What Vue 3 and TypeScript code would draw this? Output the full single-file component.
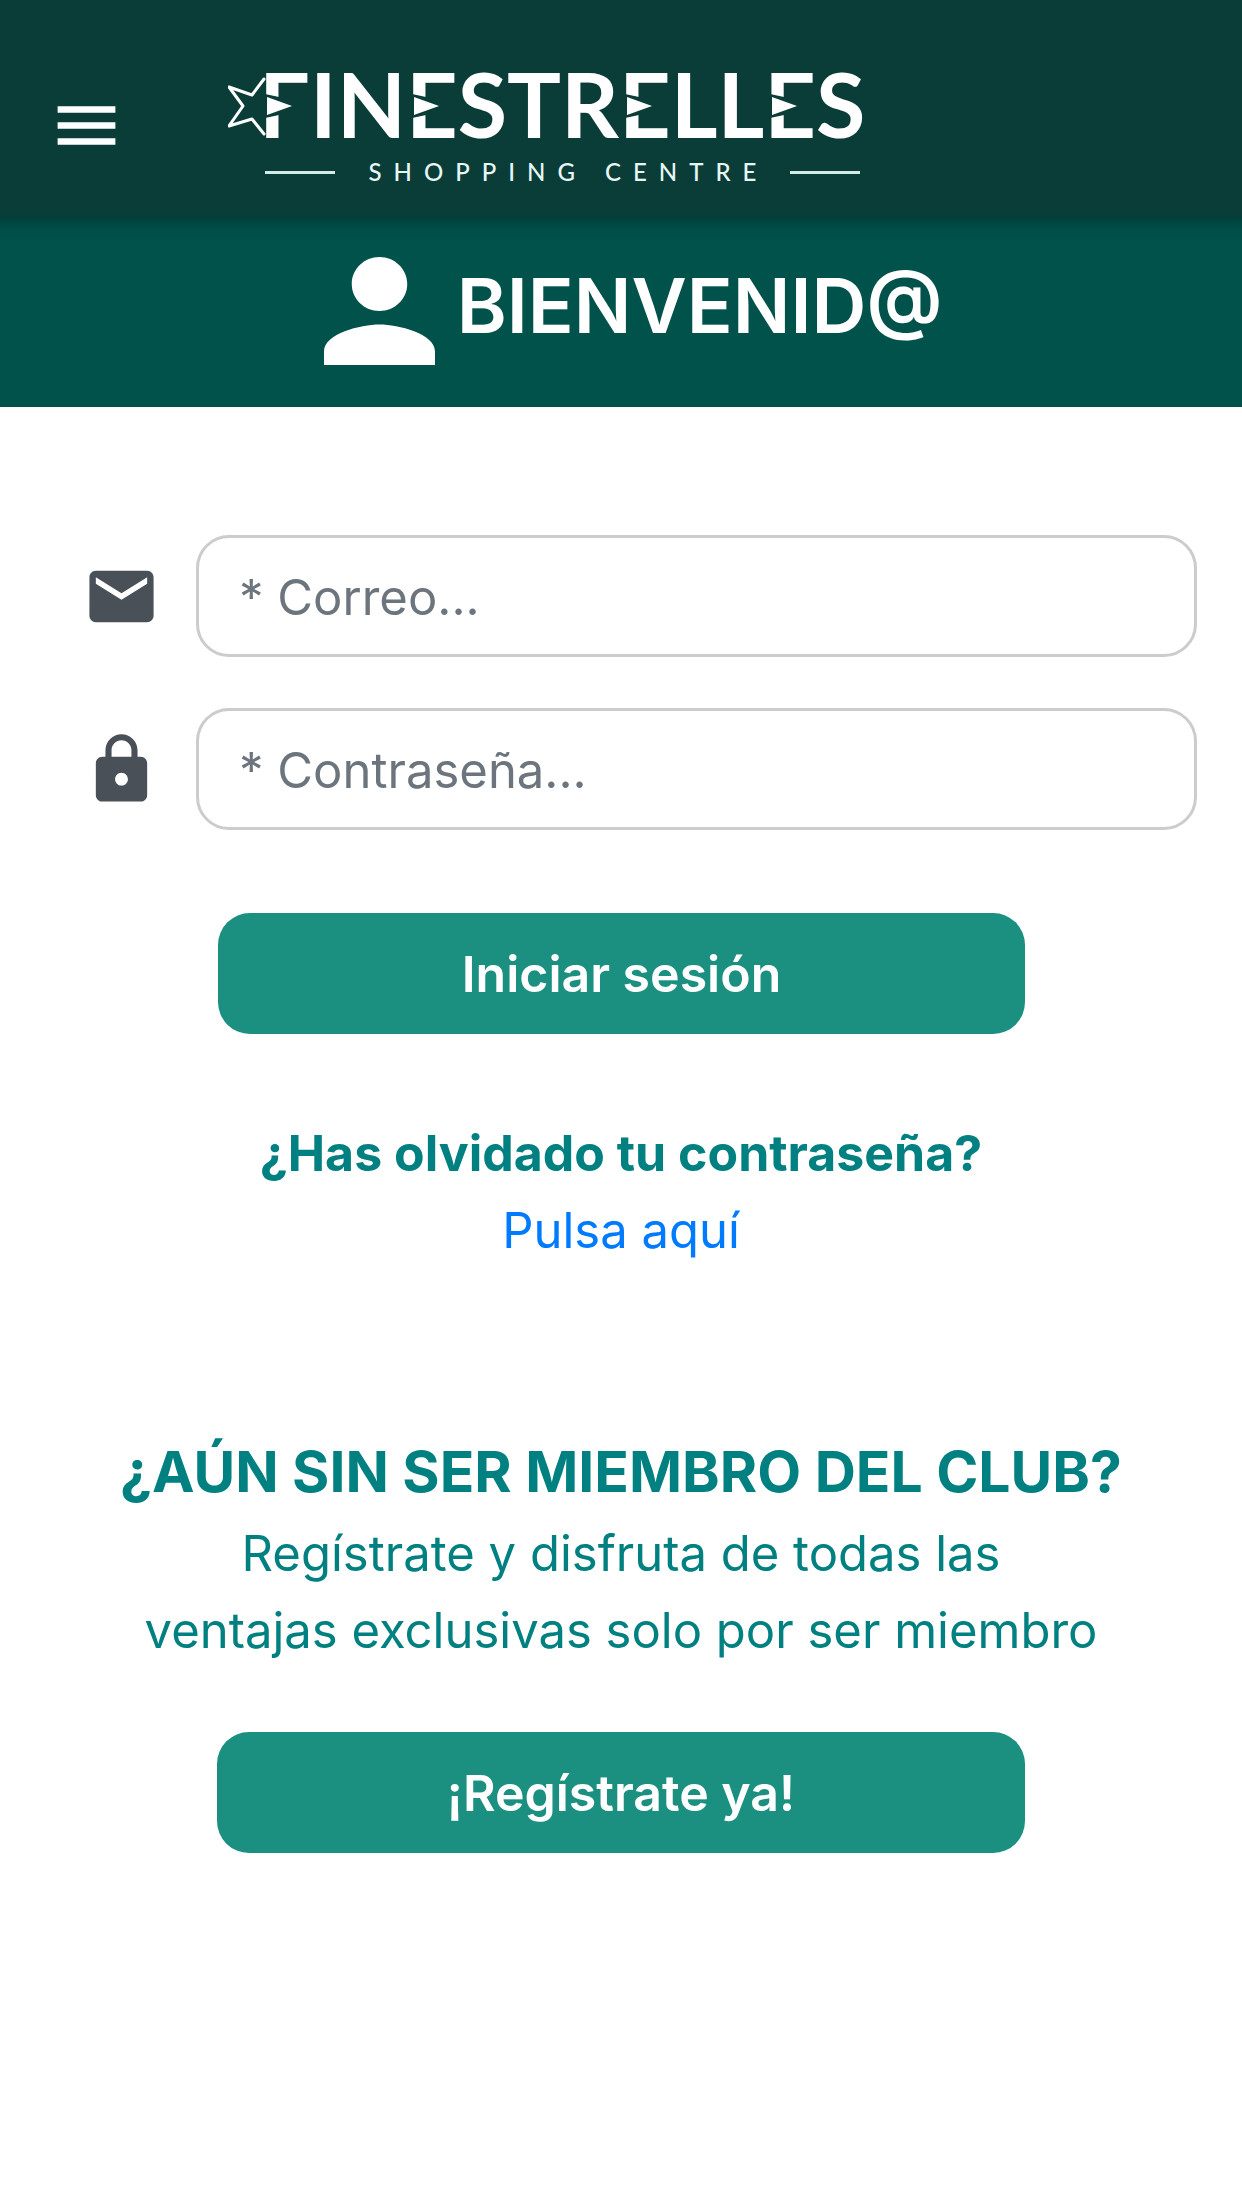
<script setup lang="ts">
import { ref } from 'vue'

interface Piece {
  text: string
  pennant: boolean
}

// Pieces flagged with a pennant have it in place of the middle arm
const brand: Piece[] = [
  { text: 'F', pennant: true },
  { text: 'IN', pennant: false },
  { text: 'E', pennant: true },
  { text: 'STR', pennant: false },
  { text: 'E', pennant: true },
  { text: 'LL', pennant: false },
  { text: 'E', pennant: true },
  { text: 'S', pennant: false },
]

const email = ref('')
const password = ref('')
</script>

<template>
  <div class="page">
    <header class="topbar">
      <button class="menu" type="button" aria-label="Menú">
        <svg viewBox="0 0 24 24" aria-hidden="true">
          <path d="M3 18h18v-2H3v2zm0-5h18v-2H3v2zm0-7v2h18V6H3z" />
        </svg>
      </button>
      <div class="logo">
        <div class="brand">
          <svg class="star" viewBox="0 0 38 72" aria-hidden="true">
            <path d="M36 12 24 28 1 20 15 39 1 59 24 52 36 67" />
          </svg>
          <div class="name"><span v-for="(piece, i) in brand" :key="i" class="piece">{{ piece.text }}<svg
            v-if="piece.pennant" class="pennant" viewBox="0 0 44 26" aria-hidden="true"><path
              class="cut" d="M-1 1 13 4H42V22H13L-1 25z" /><path class="flag" d="M1 4 26 13 1 22z" /></svg></span></div>
        </div>
        <div class="tagline">
          <i class="rule"></i>
          <span class="centre">SHOPPING CENTRE</span>
          <i class="rule"></i>
        </div>
      </div>
    </header>

    <section class="welcome">
      <svg class="person" viewBox="4 4 16 16" preserveAspectRatio="none" aria-hidden="true">
        <path
          d="M12 12c2.21 0 4-1.79 4-4s-1.79-4-4-4-4 1.79-4 4 1.79 4 4 4zm0 2c-2.67 0-8 1.34-8 4v2h16v-2c0-2.66-5.33-4-8-4z"
        />
      </svg>
      <h1>BIENVENID@</h1>
    </section>

    <main>
      <form class="login" @submit.prevent>
        <div class="field">
          <label for="email" aria-label="Correo">
            <svg viewBox="0 0 24 24" aria-hidden="true">
              <path
                d="M20 4H4c-1.1 0-1.99.9-1.99 2L2 18c0 1.1.9 2 2 2h16c1.1 0 2-.9 2-2V6c0-1.1-.9-2-2-2zm0 4l-8 5-8-5V6l8 5 8-5v2z"
              />
            </svg>
          </label>
          <input id="email" v-model="email" type="email" placeholder="* Correo..." />
        </div>
        <div class="field">
          <label for="password" aria-label="Contraseña">
            <svg viewBox="0 0 24 24" aria-hidden="true">
              <path
                d="M18 8h-1V6c0-2.76-2.24-5-5-5S7 3.24 7 6v2H6c-1.1 0-2 .9-2 2v10c0 1.1.9 2 2 2h12c1.1 0 2-.9 2-2V10c0-1.1-.9-2-2-2zm-6 9c-1.1 0-2-.9-2-2s.9-2 2-2 2 .9 2 2-.9 2-2 2zm3.1-9H8.9V6c0-1.71 1.39-3.1 3.1-3.1s3.1 1.39 3.1 3.1v2z"
              />
            </svg>
          </label>
          <input id="password" v-model="password" type="password" placeholder="* Contraseña..." />
        </div>
        <button class="action" type="submit">Iniciar sesión</button>
      </form>

      <section class="forgot">
        <p><strong>¿Has olvidado tu contraseña?</strong></p>
        <p><a href="#recuperar">Pulsa aquí</a></p>
      </section>

      <section class="join">
        <h2>¿AÚN SIN SER MIEMBRO DEL CLUB?</h2>
        <p>Regístrate y disfruta de todas las<br />ventajas exclusivas solo por ser miembro</p>
        <button class="action" type="button">¡Regístrate ya!</button>
      </section>
    </main>
  </div>
</template>

<style>
body {
  margin: 0;
  background: #fff;
}
</style>

<style scoped>
.page {
  overflow-x: hidden;
  font-family: Inter, 'Liberation Sans', sans-serif;
  font-size: 49px;
  line-height: 77px;
  color: #008080;
}

.topbar {
  position: relative;
  display: flex;
  align-items: center;
  gap: 103px;
  padding: 67px 48px 32px;
  background: #0b3d38;
  box-shadow: 0 -18px 16px 24px rgba(0, 0, 0, 0.3);
}

.menu {
  width: 77px;
  height: 77px;
  padding: 0;
  border: 0;
  background: none;
  fill: #fff;
}

.menu svg {
  display: block;
}

.logo {
  font-family: Lato, sans-serif;
}

.brand {
  display: flex;
}

.star {
  width: 38px;
  height: 72px;
  margin-right: -7px;
  fill: none;
  stroke: #fff;
  stroke-width: 3;
  stroke-linejoin: round;
  stroke-linecap: round;
}

.name {
  font-size: 90px;
  line-height: 72px;
  font-weight: 700;
  color: #fff;
}

.piece {
  position: relative;
}

.pennant {
  position: absolute;
  left: 7px;
  bottom: 38px;
  width: 44px;
  height: 26px;
  overflow: visible;
}

.cut {
  fill: #0b3d38;
}

.flag {
  fill: #fff;
}

.tagline {
  display: flex;
  justify-content: space-between;
  align-items: center;
  width: 595px;
  margin: 21px 0 0 37px;
}

.rule {
  width: 70px;
  height: 3px;
  background: #d5ebe8;
}

.centre {
  padding-left: 12px;
  font-size: 24px;
  line-height: 24px;
  font-weight: 500;
  letter-spacing: 12px;
  color: #e8f7f5;
}

.welcome {
  display: flex;
  justify-content: center;
  gap: 22px;
  padding: 41px 24px 42px 48px;
  background: #00524b;
}

.person {
  width: 111px;
  height: 108px;
  fill: #fff;
}

h1 {
  margin: 0;
  font-size: 76px;
  line-height: 96px;
  font-weight: 600;
  color: #fff;
}

.login {
  display: flex;
  flex-direction: column;
  gap: 51px;
  padding: 128px 45px 0 46px;
}

.field {
  display: flex;
  align-items: center;
}

.field label {
  display: flex;
  justify-content: center;
  width: 150px;
  fill: #495057;
}

.field svg {
  width: 77px;
  height: 77px;
}

.field input {
  box-sizing: border-box;
  flex: 1;
  min-width: 0;
  height: 122px;
  padding: 2px 40px 0;
  border: 3px solid #ccc;
  border-radius: 33px;
  background: #fff;
  font: inherit;
  color: #495057;
}

.field input::placeholder {
  color: #6c757d;
  opacity: 1;
}

.action {
  display: block;
  width: 65vw;
  height: 121px;
  margin: 0 auto;
  padding: 2px 0 0;
  border: 0;
  border-radius: 32px;
  background: #1b9080;
  font: inherit;
  font-size: 50px;
  font-weight: 600;
  color: #fff;
}

.login .action {
  margin-top: 32px;
}

p {
  margin: 0;
}

.forgot {
  padding-top: 81px;
  text-align: center;
}

strong {
  font-size: 50px;
  font-weight: 700;
}

a {
  color: #007bff;
  text-decoration: none;
}

.join {
  padding: 160px 24px 48px;
  text-align: center;
}

h2 {
  margin: 0;
  font-size: 57px;
  line-height: 86px;
  font-weight: 700;
}

.join .action {
  margin-top: 63px;
}
</style>
